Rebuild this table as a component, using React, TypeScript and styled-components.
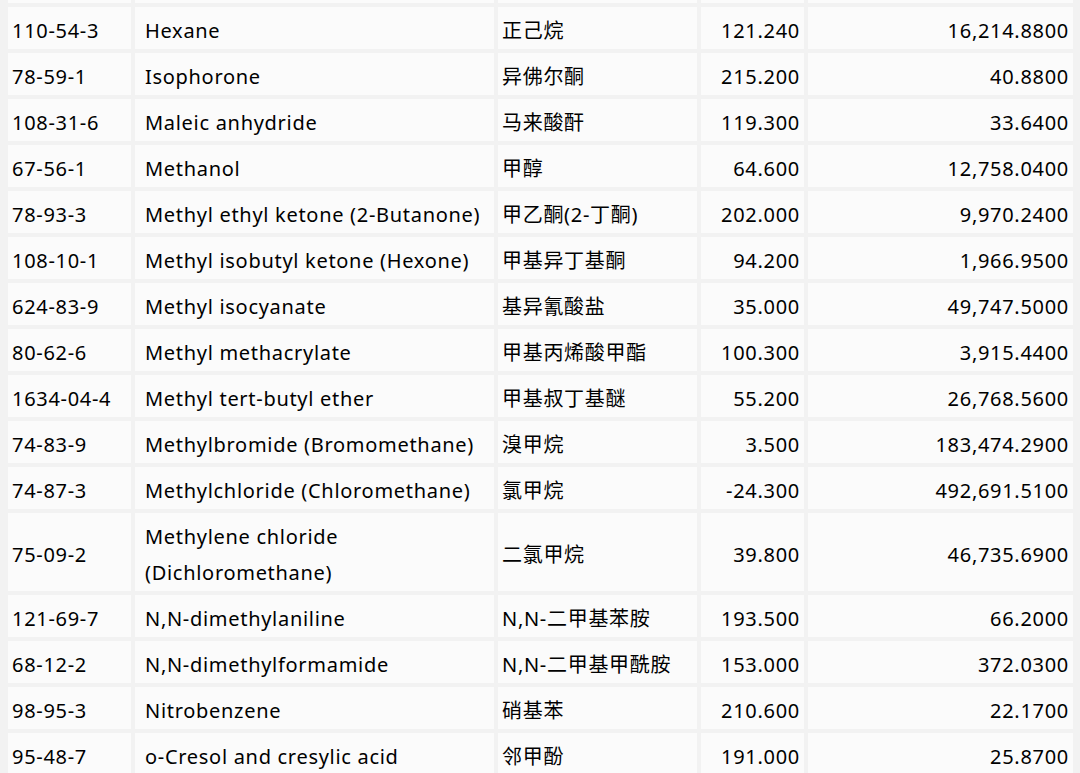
import React from "react";
import styled, { createGlobalStyle } from "styled-components";

interface Chemical {
  cas: string;
  name: string;
  zh: string;
  boiling: string;
  amount: string;
}

const GlobalStyle = createGlobalStyle`
  html, body {
    margin: 0;
    padding: 0;
    background: #f2f2f2;
  }
`;

const Viewport = styled.div`
  height: 773px;
  overflow: hidden;
  padding: 0 4px;
`;

const Table = styled.table`
  width: 1073px;
  margin-top: -4px;
  table-layout: fixed;
  border-collapse: separate;
  border-spacing: 4px;
  font-family: "Noto Sans", "Noto Sans CJK SC", sans-serif;
  font-size: 20px;
  letter-spacing: 0.7px;
  line-height: 36px;
  color: #000;
`;

const Col = styled.col<{ $width: number }>`
  width: ${(props) => props.$width}px;
`;

// the row above, scrolled almost out of view
const CutCell = styled.td`
  background: #fbfbfb;
  height: 3px;
  padding: 0;
`;

const Cell = styled.td<{ $align?: "left" | "right"; $indent?: number }>`
  background: #fbfbfb;
  padding: 6px 4px 0 ${(props) => props.$indent ?? 4}px;
  text-align: ${(props) => props.$align ?? "left"};
  vertical-align: middle;
`;

const rows: Chemical[] = [
  { cas: "110-54-3", name: "Hexane", zh: "正己烷", boiling: "121.240", amount: "16,214.8800" },
  { cas: "78-59-1", name: "Isophorone", zh: "异佛尔酮", boiling: "215.200", amount: "40.8800" },
  { cas: "108-31-6", name: "Maleic anhydride", zh: "马来酸酐", boiling: "119.300", amount: "33.6400" },
  { cas: "67-56-1", name: "Methanol", zh: "甲醇", boiling: "64.600", amount: "12,758.0400" },
  { cas: "78-93-3", name: "Methyl ethyl ketone (2-Butanone)", zh: "甲乙酮(2-丁酮)", boiling: "202.000", amount: "9,970.2400" },
  { cas: "108-10-1", name: "Methyl isobutyl ketone (Hexone)", zh: "甲基异丁基酮", boiling: "94.200", amount: "1,966.9500" },
  { cas: "624-83-9", name: "Methyl isocyanate", zh: "基异氰酸盐", boiling: "35.000", amount: "49,747.5000" },
  { cas: "80-62-6", name: "Methyl methacrylate", zh: "甲基丙烯酸甲酯", boiling: "100.300", amount: "3,915.4400" },
  { cas: "1634-04-4", name: "Methyl tert-butyl ether", zh: "甲基叔丁基醚", boiling: "55.200", amount: "26,768.5600" },
  { cas: "74-83-9", name: "Methylbromide (Bromomethane)", zh: "溴甲烷", boiling: "3.500", amount: "183,474.2900" },
  { cas: "74-87-3", name: "Methylchloride (Chloromethane)", zh: "氯甲烷", boiling: "-24.300", amount: "492,691.5100" },
  { cas: "75-09-2", name: "Methylene chloride (Dichloromethane)", zh: "二氯甲烷", boiling: "39.800", amount: "46,735.6900" },
  { cas: "121-69-7", name: "N,N-dimethylaniline", zh: "N,N-二甲基苯胺", boiling: "193.500", amount: "66.2000" },
  { cas: "68-12-2", name: "N,N-dimethylformamide", zh: "N,N-二甲基甲酰胺", boiling: "153.000", amount: "372.0300" },
  { cas: "98-95-3", name: "Nitrobenzene", zh: "硝基苯", boiling: "210.600", amount: "22.1700" },
  { cas: "95-48-7", name: "o-Cresol and cresylic acid", zh: "邻甲酚", boiling: "191.000", amount: "25.8700" },
];

const widths = [123, 359, 199, 103, 265];

const App: React.FC = () => {
  return (
    <Viewport>
      <GlobalStyle />
      <Table>
        <colgroup>
          {widths.map((w, i) => (
            <Col key={i} $width={w} />
          ))}
        </colgroup>
        <tbody>
          <tr>
            {widths.map((w, i) => (
              <CutCell key={i} />
            ))}
          </tr>
          {rows.map((row) => (
            <tr key={row.cas}>
              <Cell>{row.cas}</Cell>
              <Cell $indent={10}>{row.name}</Cell>
              <Cell>{row.zh}</Cell>
              <Cell $align="right">{row.boiling}</Cell>
              <Cell $align="right">{row.amount}</Cell>
            </tr>
          ))}
        </tbody>
      </Table>
    </Viewport>
  );
};

export default App;
